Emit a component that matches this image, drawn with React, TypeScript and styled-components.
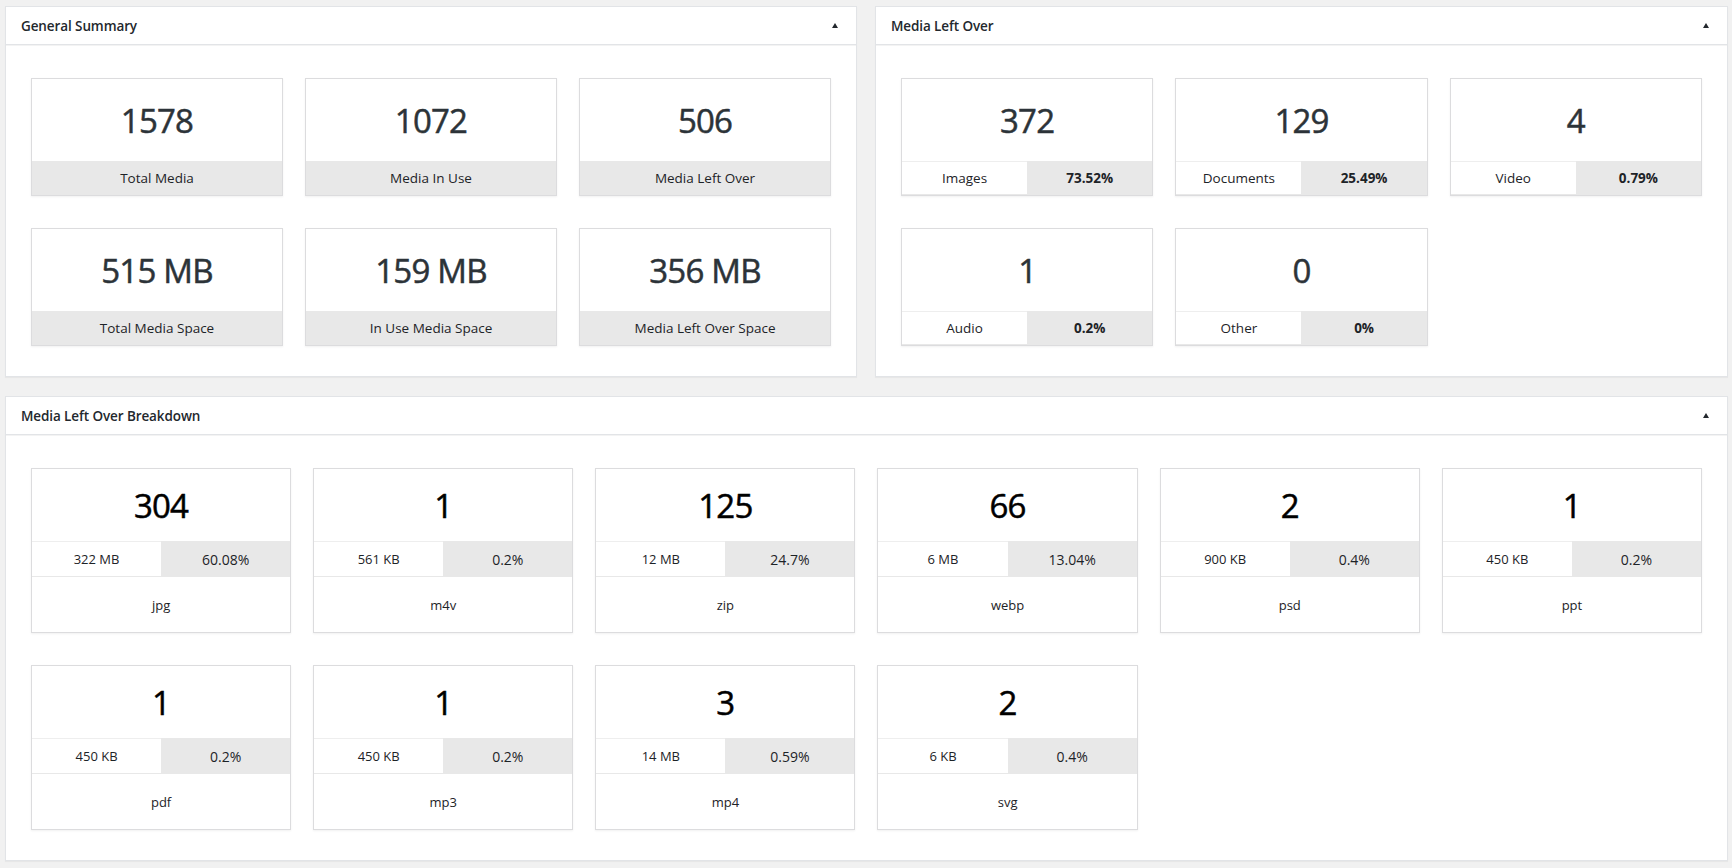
import styled, { createGlobalStyle } from 'styled-components';

const GlobalStyle = createGlobalStyle`
  html, body {
    margin: 0;
    padding: 0;
    background: #f1f1f1;
    font-family: "Open Sans", "Noto Sans", "Liberation Sans", sans-serif;
    color: #23282d;
  }
  * { box-sizing: border-box; }
`;

const Page = styled.div`
  padding: 6px 4px 8px 5px;
  display: flex;
  flex-direction: column;
  gap: 19px;
`;

const TopRow = styled.div`
  display: grid;
  grid-template-columns: 852px 853px;
  gap: 18px;
`;

const Panel = styled.section`
  background: #fff;
  border: 1px solid #e2e4e7;
  box-shadow: 0 1px 1px rgba(0, 0, 0, 0.04);
`;

const PanelHead = styled.header`
  height: 38px;
  display: flex;
  align-items: center;
  justify-content: space-between;
  padding: 0 18px 0 15px;
  border-bottom: 1px solid #e2e4e7;
  box-shadow: 0 1px 0 #f3f3f3;
`;

const PanelTitle = styled.h2`
  margin: 0;
  font-size: 13.5px;
  font-weight: 600;
  color: #23282d;
  letter-spacing: -0.1px;
`;

const Caret = styled.span`
  width: 0;
  height: 0;
  border-left: 3.5px solid transparent;
  border-right: 3.5px solid transparent;
  border-bottom: 5px solid #23282d;
`;

const PanelBody = styled.div<{ $cols: number }>`
  display: grid;
  grid-template-columns: repeat(${(p) => p.$cols}, 1fr);
  column-gap: 22px;
  row-gap: 32px;
  padding: 33px 25px 30px;
  align-content: start;
`;

const Card = styled.div`
  border: 1px solid #dcdcde;
  box-shadow: 0 1px 2px rgba(0, 0, 0, 0.06);
  background: #fff;
  display: flex;
  flex-direction: column;
`;

const Big = styled.div<{ $h: number; $dark?: boolean }>`
  height: ${(p) => p.$h}px;
  display: flex;
  align-items: center;
  justify-content: center;
  font-size: 33px;
  font-weight: 400;
  color: ${(p) => (p.$dark ? '#000' : '#2c3338')};
  -webkit-text-stroke: 0.5px ${(p) => (p.$dark ? '#000' : '#2c3338')};
  letter-spacing: -0.8px;
`;

const Band = styled.div`
  height: 34px;
  background: #e8e8e8;
  display: flex;
  align-items: center;
  justify-content: center;
  font-size: 13.5px;
  color: #1d2327;
`;

const Split = styled.div<{ $h: number }>`
  height: ${(p) => p.$h}px;
  display: grid;
  grid-template-columns: 1fr 1fr;
`;

const Cell = styled.div<{ $shade?: boolean; $bold?: boolean; $size?: number }>`
  display: flex;
  align-items: center;
  justify-content: center;
  background: ${(p) => (p.$shade ? '#e8e8e8' : '#fff')};
  border-bottom: ${(p) => (p.$shade ? 'none' : '1px solid #e8e8e8')};
  border-top: ${(p) => (p.$shade ? 'none' : '1px solid #eeeeee')};
  font-size: ${(p) => p.$size ?? 13.5}px;
  font-weight: ${(p) => (p.$bold ? 700 : 400)};
  color: #1d2327;
`;

const Ext = styled.div`
  height: 55px;
  display: flex;
  align-items: center;
  justify-content: center;
  font-size: 13px;
  color: #1d2327;
`;

const summary = [
  { v: '1578', l: 'Total Media' },
  { v: '1072', l: 'Media In Use' },
  { v: '506', l: 'Media Left Over' },
  { v: '515 MB', l: 'Total Media Space' },
  { v: '159 MB', l: 'In Use Media Space' },
  { v: '356 MB', l: 'Media Left Over Space' },
];

const leftover = [
  { v: '372', l: 'Images', p: '73.52%' },
  { v: '129', l: 'Documents', p: '25.49%' },
  { v: '4', l: 'Video', p: '0.79%' },
  { v: '1', l: 'Audio', p: '0.2%' },
  { v: '0', l: 'Other', p: '0%' },
];

const breakdown = [
  { v: '304', s: '322 MB', p: '60.08%', e: 'jpg' },
  { v: '1', s: '561 KB', p: '0.2%', e: 'm4v' },
  { v: '125', s: '12 MB', p: '24.7%', e: 'zip' },
  { v: '66', s: '6 MB', p: '13.04%', e: 'webp' },
  { v: '2', s: '900 KB', p: '0.4%', e: 'psd' },
  { v: '1', s: '450 KB', p: '0.2%', e: 'ppt' },
  { v: '1', s: '450 KB', p: '0.2%', e: 'pdf' },
  { v: '1', s: '450 KB', p: '0.2%', e: 'mp3' },
  { v: '3', s: '14 MB', p: '0.59%', e: 'mp4' },
  { v: '2', s: '6 KB', p: '0.4%', e: 'svg' },
];

function Head({ title }: { title: string }) {
  return (
    <PanelHead>
      <PanelTitle>{title}</PanelTitle>
      <Caret />
    </PanelHead>
  );
}

export default function App() {
  return (
    <>
      <GlobalStyle />
      <Page>
        <TopRow>
          <Panel>
            <Head title="General Summary" />
            <PanelBody $cols={3}>
              {summary.map((s) => (
                <Card key={s.l}>
                  <Big $h={82}>{s.v}</Big>
                  <Band>{s.l}</Band>
                </Card>
              ))}
            </PanelBody>
          </Panel>
          <Panel>
            <Head title="Media Left Over" />
            <PanelBody $cols={3}>
              {leftover.map((s) => (
                <Card key={s.l}>
                  <Big $h={82}>{s.v}</Big>
                  <Split $h={34}>
                    <Cell>{s.l}</Cell>
                    <Cell $shade $bold>
                      {s.p}
                    </Cell>
                  </Split>
                </Card>
              ))}
            </PanelBody>
          </Panel>
        </TopRow>
        <Panel>
          <Head title="Media Left Over Breakdown" />
          <PanelBody $cols={6}>
            {breakdown.map((b) => (
              <Card key={b.e}>
                <Big $h={72} $dark>
                  {b.v}
                </Big>
                <Split $h={36}>
                  <Cell $size={13}>{b.s}</Cell>
                  <Cell $shade $size={14}>
                    {b.p}
                  </Cell>
                </Split>
                <Ext>{b.e}</Ext>
              </Card>
            ))}
          </PanelBody>
        </Panel>
      </Page>
    </>
  );
}
